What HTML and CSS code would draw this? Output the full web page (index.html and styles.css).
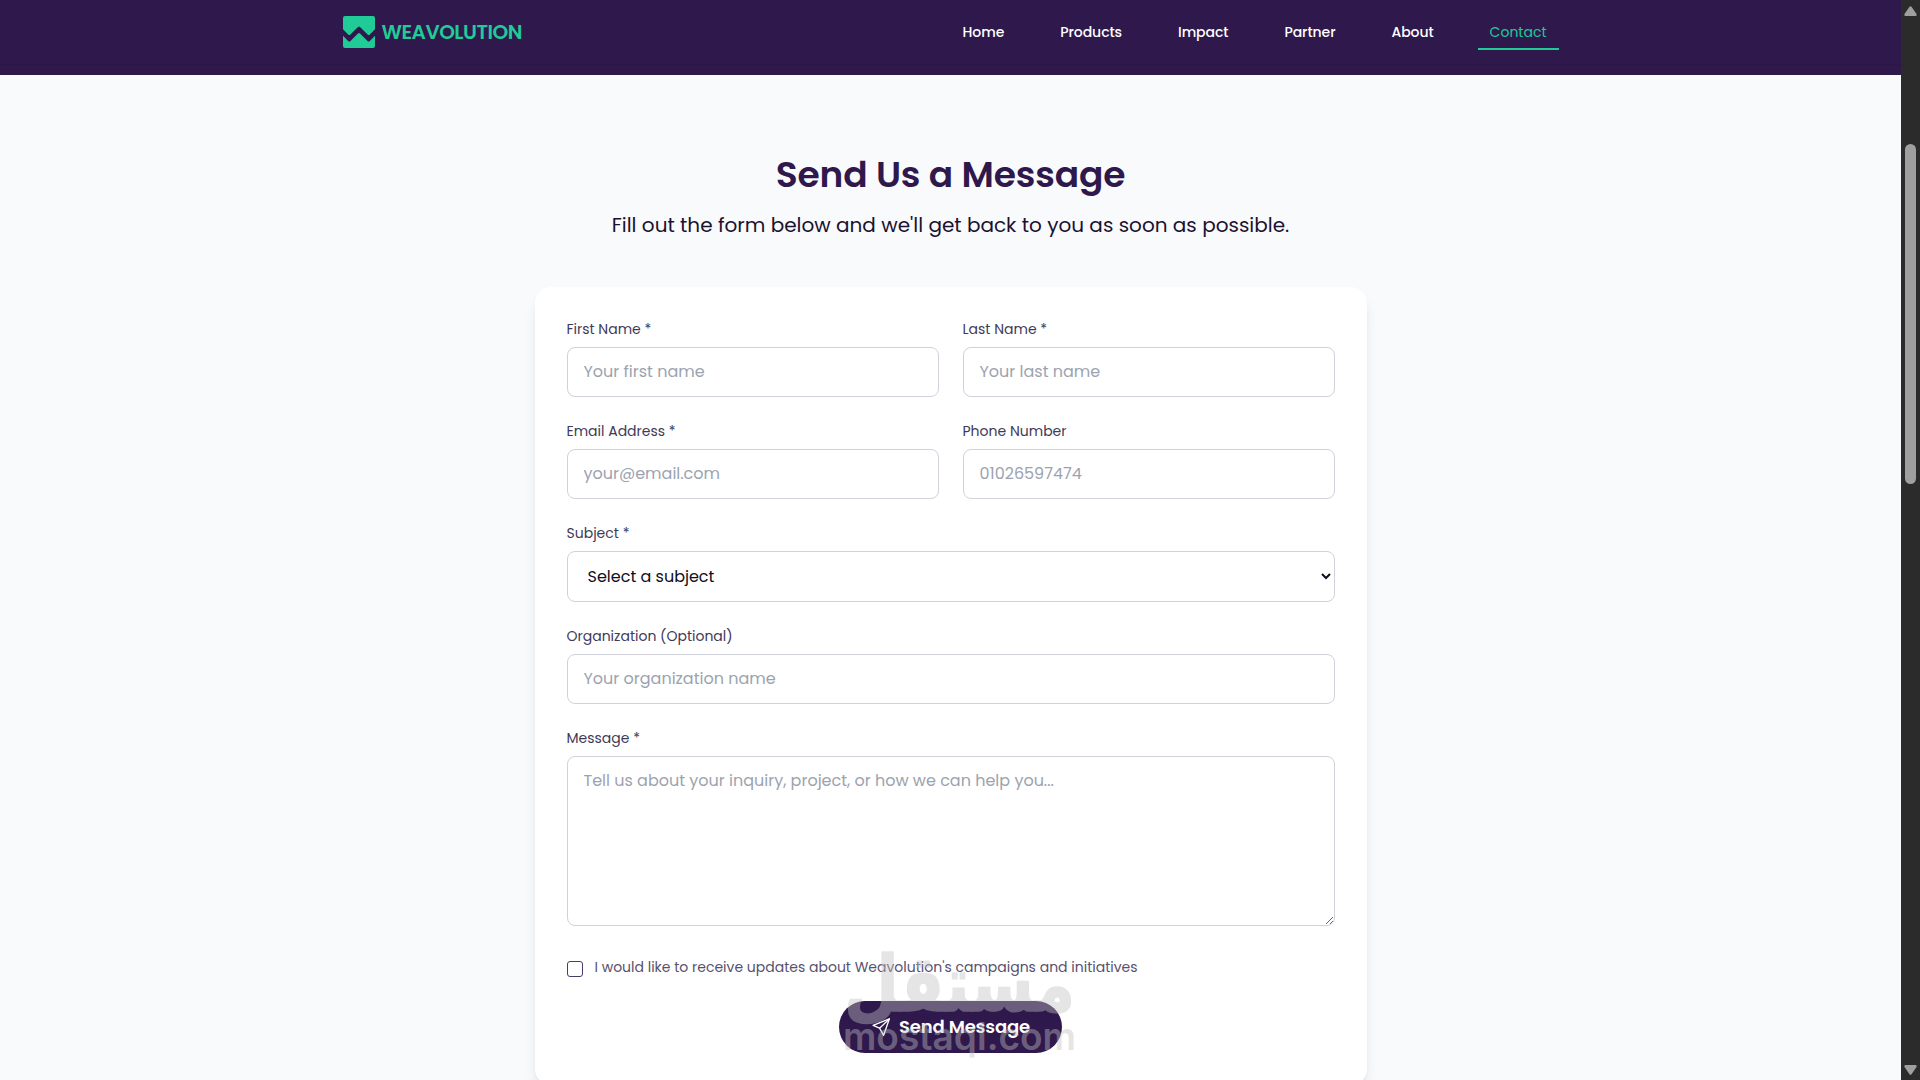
FILE: index.html
```html
<!DOCTYPE html>
<html lang="en">
<head>
    <meta charset="UTF-8">
    <meta name="viewport" content="width=device-width, initial-scale=1.0">
    <title>Contact - Weavolution</title>
    <link rel="stylesheet" href="styles.css">
</head>
<body>
    <div class="page">
        <header class="header">
            <div class="header-inner">
                <a class="logo" href="#">
                    <svg width="32" height="32" viewBox="0 0 32 32" fill="#20cb97">
                        <path d="M2 0H30Q32 0 32 2V13.3L26.6 18.7Q25.7 19.5 24.8 18.7L17 10.9Q16 10 15 10.9L7.2 18.7Q6.3 19.5 5.4 18.7L0 13.3V2Q0 0 2 0Z"/>
                        <path d="M0 19.8L5.4 25.2Q6.3 26 7.2 25.2L15 17.4Q16 16.5 17 17.4L24.8 25.2Q25.7 26 26.6 25.2L32 19.8V30Q32 32 30 32H2Q0 32 0 30Z"/>
                    </svg>
                    <span class="logo-text">WEAVOLUTION</span>
                </a>
                <nav class="nav">
                    <a href="#">Home</a>
                    <a href="#">Products</a>
                    <a href="#">Impact</a>
                    <a href="#">Partner</a>
                    <a href="#">About</a>
                    <a href="#" class="active">Contact</a>
                </nav>
            </div>
        </header>
        <div class="hero-end"></div>

        <main class="contact">
            <h1>Send Us a Message</h1>
            <p class="intro">Fill out the form below and we'll get back to you as soon as possible.</p>

            <form class="card">
                <div class="row">
                    <div class="field">
                        <label for="first">First Name *</label>
                        <input type="text" id="first" placeholder="Your first name">
                    </div>
                    <div class="field">
                        <label for="last">Last Name *</label>
                        <input type="text" id="last" placeholder="Your last name">
                    </div>
                </div>
                <div class="row">
                    <div class="field">
                        <label for="email">Email Address *</label>
                        <input type="email" id="email" placeholder="your@email.com">
                    </div>
                    <div class="field">
                        <label for="phone">Phone Number</label>
                        <input type="tel" id="phone" placeholder="01026597474">
                    </div>
                </div>
                <div class="field">
                    <label for="subject">Subject *</label>
                    <select id="subject">
                        <option>Select a subject</option>
                    </select>
                </div>
                <div class="field">
                    <label for="org">Organization (Optional)</label>
                    <input type="text" id="org" placeholder="Your organization name">
                </div>
                <div class="field">
                    <label for="message">Message *</label>
                    <textarea id="message" rows="6" placeholder="Tell us about your inquiry, project, or how we can help you..."></textarea>
                </div>
                <div class="updates">
                    <input type="checkbox" id="updates">
                    <label for="updates">I would like to receive updates about Weavolution's campaigns and initiatives</label>
                </div>
                <div class="actions">
                    <button type="button" class="send-btn">
                        <svg width="20" height="20" viewBox="0 0 20 20" fill="none" stroke="#fff" stroke-width="1.4" stroke-linejoin="round" stroke-linecap="round">
                            <path d="M18.3 1.5L1.2 8.3L8 11.3L12.3 18.8Z"/>
                            <path d="M18.3 1.5L8 11.3"/>
                        </svg>
                        <span>Send Message</span>
                    </button>
                    <svg class="watermark" width="250" height="120" viewBox="0 0 250 120">
                        <text class="wm-ar" x="240" y="66" direction="rtl" textLength="231" lengthAdjust="spacingAndGlyphs">مستقل</text>
                        <text class="wm-en" x="8" y="105" textLength="233" lengthAdjust="spacingAndGlyphs">mostaql.com</text>
                    </svg>
                </div>
            </form>
        </main>
    </div>

    <div class="scrollbar">
        <svg width="13" height="10" viewBox="0 0 13 10" fill="#9f9f9f"><path d="M5.5 .8Q6.5-.4 7.5 .8L12.5 8Q13 10 11.5 10H1.5Q0 10 .5 8Z"/></svg>
        <div class="thumb"></div>
        <svg class="down" width="13" height="10" viewBox="0 0 13 10" fill="#9f9f9f"><path d="M5.5 9.2Q6.5 10.4 7.5 9.2L12.5 2Q13 0 11.5 0H1.5Q0 0 .5 2Z"/></svg>
    </div>
</body>
</html>
```
FILE: styles.css
```css
* {
    box-sizing: border-box;
}
body {
    margin: 0;
    display: flex;
    height: 100vh;
    overflow: hidden;
    font-family: Poppins, Inter, sans-serif;
    color: #1a1230;
    background-color: #f9fafc;
}
.page {
    flex: 1;
    height: 100vh;
    overflow: hidden;
}
.header {
    background-color: #2e184c;
    border-bottom: 1px solid #2b1647;
}
.header-inner {
    max-width: 1216px;
    height: 64px;
    margin: 0 auto;
    display: flex;
    align-items: center;
    justify-content: space-between;
}
.hero-end {
    height: 10px;
    background-color: #2e184c;
}
.logo {
    display: flex;
    align-items: center;
    gap: 7px;
    text-decoration: none;
}
.logo-text {
    color: #20cb97;
    font-size: 20px;
    font-weight: 600;
    letter-spacing: -0.5px;
}
.nav {
    display: flex;
    gap: 32px;
}
.nav a {
    padding: 8px 12px;
    font-size: 14px;
    line-height: 20px;
    font-weight: 500;
    letter-spacing: -0.07px;
    color: #fff;
    text-decoration: none;
}
.nav a.active {
    color: #20cb97;
    font-weight: 400;
    letter-spacing: 0;
    box-shadow: inset 0 -2px #20cb97;
}
.contact {
    width: 832px;
    margin: 0 auto;
    padding-top: 80px;
    text-align: center;
}
h1 {
    margin: 0 0 16px;
    font-size: 36px;
    line-height: 40px;
    font-weight: 600;
    letter-spacing: -0.15px;
    color: #2e184c;
}
.intro {
    margin: 0 0 48px;
    font-size: 20px;
    line-height: 28px;
}
.card {
    background-color: #fff;
    border-radius: 16px;
    padding: 32px;
    text-align: left;
    box-shadow: 0 10px 15px -3px rgba(0, 0, 0, 0.1), 0 4px 6px -4px rgba(0, 0, 0, 0.1);
}
.row {
    display: grid;
    grid-template-columns: 1fr 1fr;
    gap: 24px;
}
.field {
    margin-bottom: 24px;
}
.field label {
    display: block;
    margin-bottom: 8px;
    font-size: 14px;
    line-height: 20px;
    color: #3f3a58;
}
.field input, .field select, .field textarea {
    display: block;
    width: 100%;
    height: 50px;
    padding: 12px 16px;
    border: 1px solid #d1d1db;
    border-radius: 8px;
    background-color: #fff;
    color: #120c20;
    font-family: inherit;
    font-size: 16px;
    line-height: 24px;
}
.field input {
    padding: 11px 16px 13px;
}
.field select {
    height: 51px;
}
.field textarea {
    height: 170px;
    resize: vertical;
}
::placeholder {
    color: #9ca3af;
}
.updates {
    display: flex;
    margin-top: 31px;
    margin-bottom: 24px;
    font-size: 14px;
    line-height: 20px;
    color: #57516f;
}
.updates input {
    width: 16px;
    height: 16px;
    margin: 4px 12px 0 0;
    appearance: none;
    border: 1px solid #4c3a68;
    border-radius: 3px;
}
.actions {
    display: flex;
    justify-content: center;
    position: relative;
}
.send-btn {
    display: flex;
    align-items: center;
    gap: 8px;
    width: 223px;
    height: 52px;
    padding: 0 32px 1px 33px;
    border: none;
    border-radius: 26px;
    background-color: #2e184c;
    color: #fff;
    font-family: inherit;
    font-size: 18px;
    font-weight: 600;
    letter-spacing: -0.15px;
    white-space: nowrap;
}
.watermark {
    position: absolute;
    left: 268px;
    top: -56px;
    overflow: visible;
    fill: #c2c2c2;
    opacity: 0.41;
    pointer-events: none;
}
.wm-ar {
    font-family: "DejaVu Sans", sans-serif;
    font-size: 78px;
    font-weight: bold;
    stroke: #c2c2c2;
    stroke-width: 1.5px;
    stroke-linejoin: round;
}
.wm-en {
    font-family: Inter, sans-serif;
    font-size: 38px;
    font-weight: 600;
}
.scrollbar {
    width: 19px;
    height: 100vh;
    padding: 6px 0 5px;
    display: flex;
    flex-direction: column;
    align-items: center;
    background-color: #2b2b2b;
}
.thumb {
    width: 11px;
    height: 340px;
    margin-top: 128px;
    border-radius: 6px;
    background-color: #9f9f9f;
}
.down {
    margin-top: auto;
}
```
